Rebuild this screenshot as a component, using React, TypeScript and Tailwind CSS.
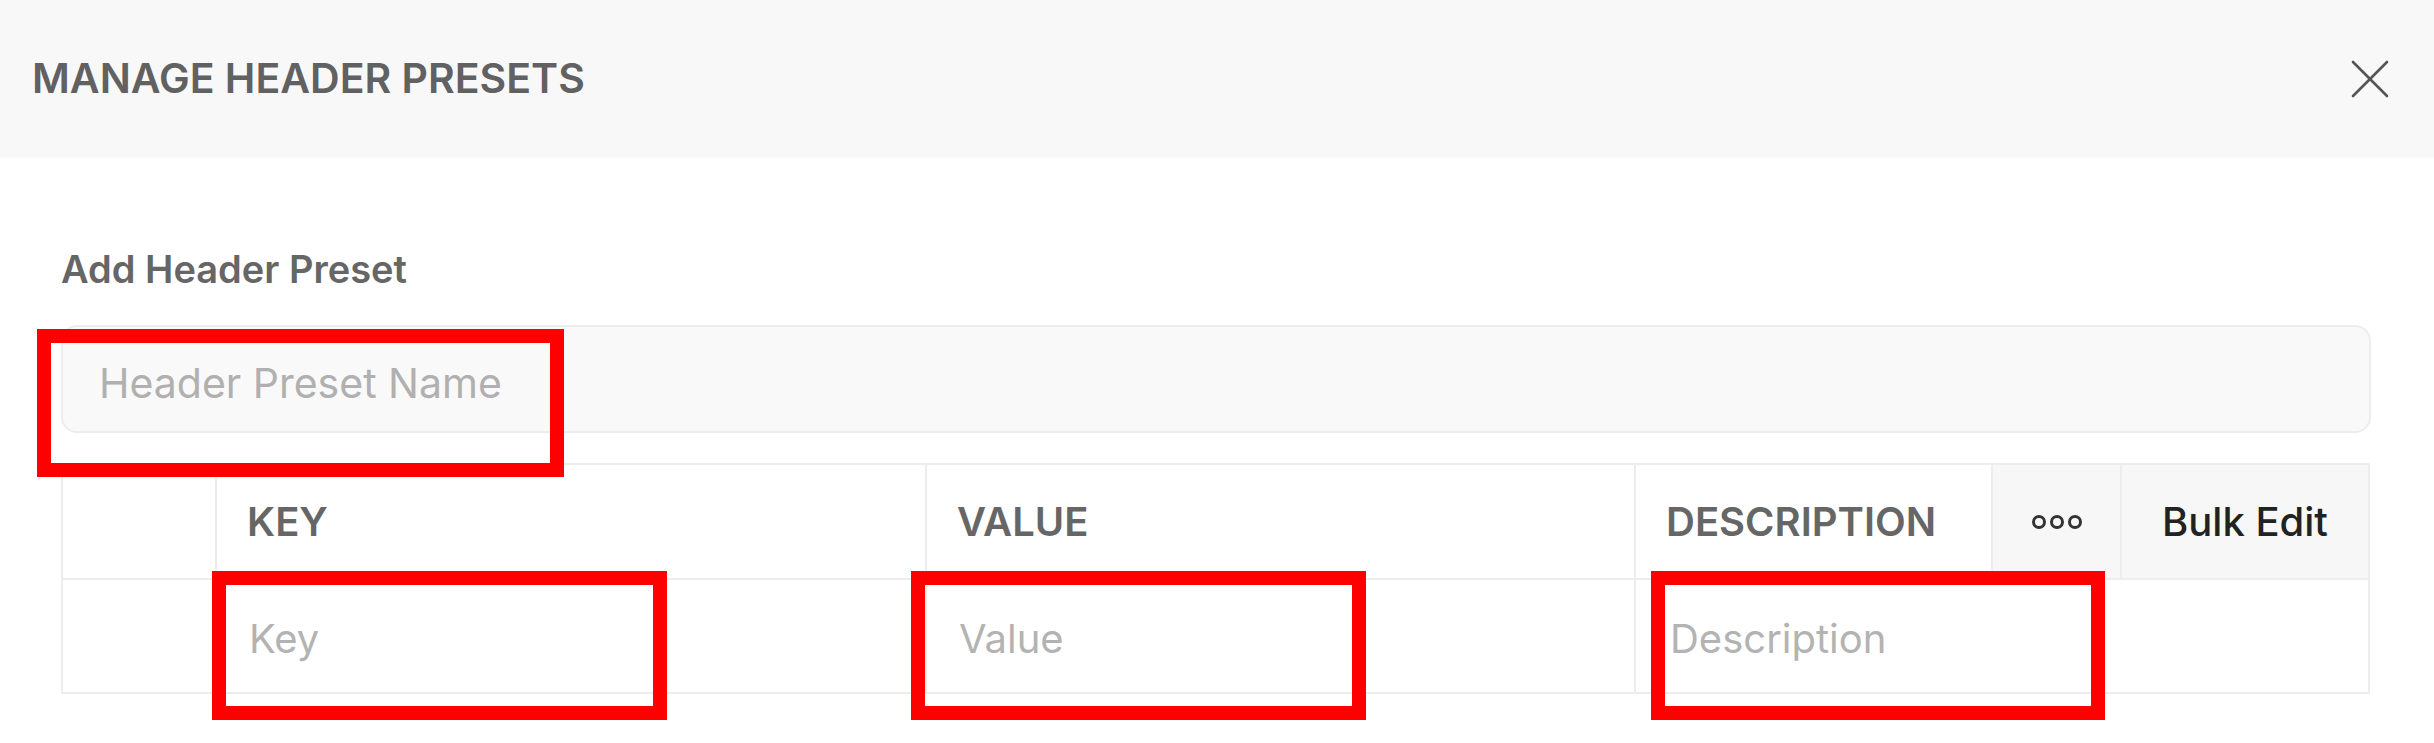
const cellBorder = "border-r-2 border-b-2 border-[#ededed]";

function Dots() {
  return (
    <svg width="50" height="16" viewBox="0 0 50 16" fill="none" stroke="#333" strokeWidth="3">
      <circle cx="7" cy="8" r="5.5" />
      <circle cx="25" cy="8" r="5.5" />
      <circle cx="43" cy="8" r="5.5" />
    </svg>
  );
}

function CloseIcon() {
  return (
    <svg width="38" height="38" viewBox="0 0 38 38" fill="none" stroke="#555" strokeWidth="2.6" strokeLinecap="round">
      <path d="M2 2 L36 36" />
      <path d="M36 2 L2 36" />
    </svg>
  );
}

export default function App() {
  return (
    <div className="relative w-full h-[743px] bg-white overflow-hidden font-['Inter','Noto_Sans',sans-serif]">
      {/* Modal header */}
      <div className="h-[158px] bg-[#f8f8f8] flex items-center justify-between pl-[32px] pr-[45px]">
        <h1 className="text-[41px] font-semibold text-[#616161]">MANAGE HEADER PRESETS</h1>
        <CloseIcon />
      </div>

      {/* Body */}
      <div className="pt-[72px] pl-[61px] pr-[63px]">
        <div className="h-[78px] flex items-center">
          <h2 className="text-[38px] font-semibold text-[#666]">Add Header Preset</h2>
        </div>

        <input
          type="text"
          placeholder="Header Preset Name"
          className="mt-[17px] block w-full h-[108px] pt-2 px-[36px] rounded-[16px] bg-[#f9f9f9] border-2 border-[#ededed] text-[41px] text-[#333] placeholder:text-[#b0b0b0] outline-none"
        />

        {/* Key / value table */}
        <div className="mt-[30px] w-[2309px] grid grid-cols-[154px_710px_709px_357px_129px_1fr] border-t-2 border-l-2 border-[#ededed]">
          <div className={`h-[115px] ${cellBorder}`} />
          <div className={`h-[115px] flex items-center pl-[30px] text-[40px] font-semibold text-[#666] ${cellBorder}`}>KEY</div>
          <div className={`h-[115px] flex items-center pl-[30px] text-[40px] font-semibold text-[#666] ${cellBorder}`}>VALUE</div>
          <div className={`h-[115px] flex items-center pl-[30px] text-[40px] font-semibold text-[#666] ${cellBorder}`}>DESCRIPTION</div>
          <div className={`h-[115px] flex items-center justify-center bg-[#f7f7f7] ${cellBorder}`}>
            <Dots />
          </div>
          <div className={`h-[115px] flex items-center justify-center bg-[#f7f7f7] text-[40px] font-medium text-[#222] ${cellBorder}`}>
            Bulk Edit
          </div>

          <div className={`h-[114px] ${cellBorder}`} />
          <div className={`h-[114px] ${cellBorder}`}>
            <input placeholder="Key" className="w-full h-full pt-1 pl-[32px] text-[40px] placeholder:text-[#b3b3b3] outline-none bg-transparent" />
          </div>
          <div className={`h-[114px] ${cellBorder}`}>
            <input placeholder="Value" className="w-full h-full pt-1 pl-[32px] text-[40px] placeholder:text-[#b3b3b3] outline-none bg-transparent" />
          </div>
          <div className={`h-[114px] col-span-3 ${cellBorder}`}>
            <input placeholder="Description" className="w-full h-full pt-1 pl-[34px] text-[40px] placeholder:text-[#b3b3b3] outline-none bg-transparent" />
          </div>
        </div>
      </div>

      {/* Annotation boxes */}
      <div className="absolute left-[37px] top-[329px] w-[527px] h-[148px] border-[14px] border-[#ff0000]" />
      <div className="absolute left-[212px] top-[571px] w-[455px] h-[149px] border-[14px] border-[#ff0000]" />
      <div className="absolute left-[911px] top-[571px] w-[455px] h-[149px] border-[14px] border-[#ff0000]" />
      <div className="absolute left-[1651px] top-[571px] w-[454px] h-[149px] border-[14px] border-[#ff0000]" />
    </div>
  );
}
